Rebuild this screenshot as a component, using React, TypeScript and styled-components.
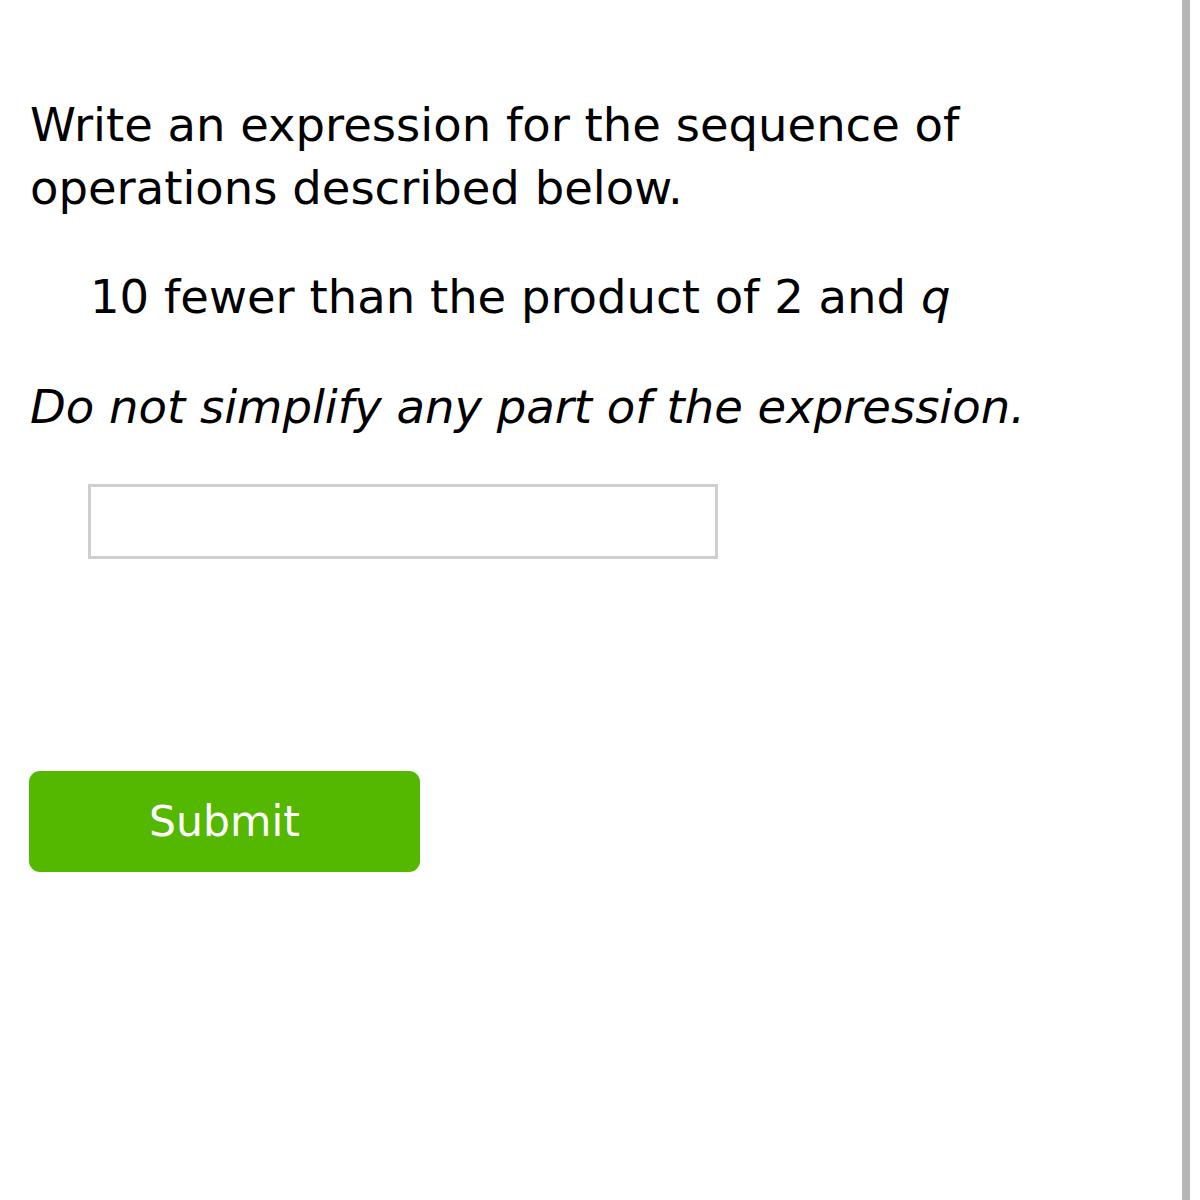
import React from "react";
import styled, { createGlobalStyle } from "styled-components";

const Global = createGlobalStyle`
  html, body { margin: 0; padding: 0; background: #ffffff; }
  body { font-family: "DejaVu Sans", Verdana, sans-serif; color: #000; }
`;

const Page = styled.div`
  display: flex;
  width: 1200px;
  height: 1200px;
  background: #fff;
`;

const Main = styled.main`
  width: 1182px;
  box-sizing: border-box;
  padding: 94px 0 0 30px;
`;

const Rail = styled.div`
  width: 8px;
  height: 1200px;
  background: #b6b6b6;
`;

const Prompt = styled.p`
  margin: 0;
  font-size: 46.5px;
  line-height: 63px;
  width: 1000px;
`;

const Phrase = styled.p`
  margin: 46px 0 0 60px;
  font-size: 46.5px;
  line-height: 63px;
`;

const Note = styled.p`
  margin: 47px 0 0 0;
  font-size: 46.5px;
  line-height: 63px;
  font-style: italic;
`;

const AnswerBox = styled.input`
  display: block;
  margin: 45px 0 0 58px;
  width: 630px;
  height: 75px;
  box-sizing: border-box;
  border: 3px solid #cfcfcf;
  background: #fff;
  outline: none;
  font-size: 40px;
  font-family: inherit;
`;

const SubmitButton = styled.button`
  display: block;
  margin: 212px 0 0 -1px;
  width: 391px;
  height: 101px;
  border: none;
  border-radius: 11px;
  background: #54b800;
  color: #fff;
  font-family: "DejaVu Sans", Verdana, sans-serif;
  font-size: 42.5px;
  cursor: pointer;
`;

export default function App() {
  return (
    <>
      <Global />
      <Page>
        <Main>
          <Prompt>Write an expression for the sequence of operations described below.</Prompt>
          <Phrase>
            10 fewer than the product of 2 and <i>q</i>
          </Phrase>
          <Note>Do not simplify any part of the expression.</Note>
          <AnswerBox type="text" aria-label="answer" />
          <SubmitButton>Submit</SubmitButton>
        </Main>
        <Rail />
      </Page>
    </>
  );
}
